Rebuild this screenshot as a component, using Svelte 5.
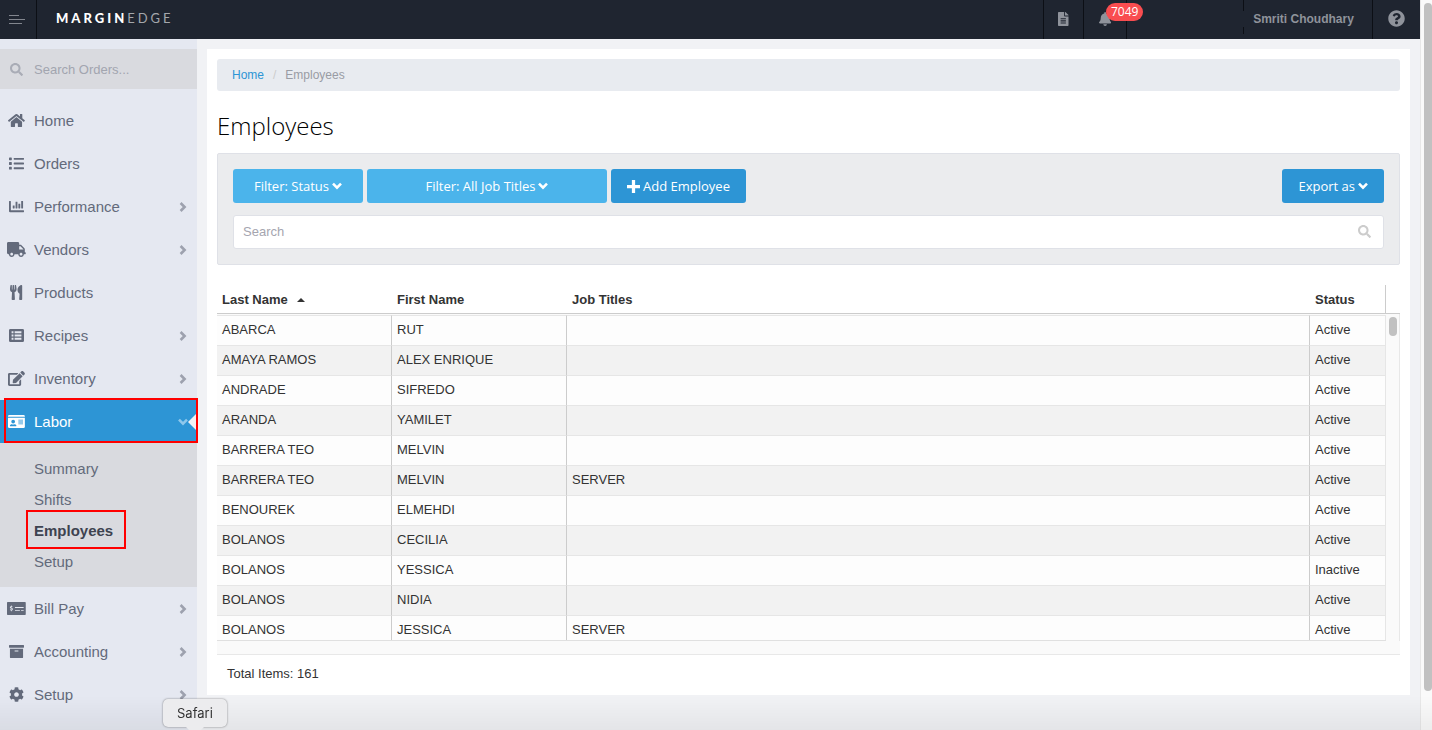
<script>
  const ICONS = {
    home: {
      box: '0 0 576 512',
      path: 'M280.37 148.26L96 300.11V464a16 16 0 0 0 16 16l112.06-.29a16 16 0 0 0 15.92-16V368a16 16 0 0 1 16-16h64a16 16 0 0 1 16 16v95.64a16 16 0 0 0 16 16.05L464 480a16 16 0 0 0 16-16V300L295.67 148.26a12.19 12.19 0 0 0-15.3 0zM571.6 251.47L488 182.56V44.05a12 12 0 0 0-12-12h-56a12 12 0 0 0-12 12v72.61L318.47 43a48 48 0 0 0-61 0L4.34 251.47a12 12 0 0 0-1.6 16.9l25.5 31A12 12 0 0 0 45.15 301l235.22-193.74a12.19 12.19 0 0 1 15.3 0L530.9 301a12 12 0 0 0 16.9-1.6l25.5-31a12 12 0 0 0-1.7-16.93z'
    },
    list: {
      box: '0 0 512 512',
      path: 'M80 368H16a16 16 0 0 0-16 16v64a16 16 0 0 0 16 16h64a16 16 0 0 0 16-16v-64a16 16 0 0 0-16-16zm0-320H16A16 16 0 0 0 0 64v64a16 16 0 0 0 16 16h64a16 16 0 0 0 16-16V64a16 16 0 0 0-16-16zm0 160H16a16 16 0 0 0-16 16v64a16 16 0 0 0 16 16h64a16 16 0 0 0 16-16v-64a16 16 0 0 0-16-16zm416 176H176a16 16 0 0 0-16 16v32a16 16 0 0 0 16 16h320a16 16 0 0 0 16-16v-32a16 16 0 0 0-16-16zm0-320H176a16 16 0 0 0-16 16v32a16 16 0 0 0 16 16h320a16 16 0 0 0 16-16V80a16 16 0 0 0-16-16zm0 160H176a16 16 0 0 0-16 16v32a16 16 0 0 0 16 16h320a16 16 0 0 0 16-16v-32a16 16 0 0 0-16-16z'
    },
    chart: {
      box: '0 0 512 512',
      path: 'M332.8 320h38.4c6.4 0 12.8-6.4 12.8-12.8V172.8c0-6.4-6.4-12.8-12.8-12.8h-38.4c-6.4 0-12.8 6.4-12.8 12.8v134.4c0 6.4 6.4 12.8 12.8 12.8zm96 0h38.4c6.4 0 12.8-6.4 12.8-12.8V76.8c0-6.4-6.4-12.8-12.8-12.8h-38.4c-6.4 0-12.8 6.4-12.8 12.8v230.4c0 6.4 6.4 12.8 12.8 12.8zm-288 0h38.4c6.4 0 12.8-6.4 12.8-12.8v-70.4c0-6.4-6.4-12.8-12.8-12.8h-38.4c-6.4 0-12.8 6.4-12.8 12.8v70.4c0 6.4 6.4 12.8 12.8 12.8zm96 0h38.4c6.4 0 12.8-6.4 12.8-12.8V108.8c0-6.4-6.4-12.8-12.8-12.8h-38.4c-6.4 0-12.8 6.4-12.8 12.8v198.4c0 6.4 6.4 12.8 12.8 12.8zM496 384H64V80c0-8.84-7.16-16-16-16H16C7.16 64 0 71.16 0 80v336c0 17.67 14.33 32 32 32h464c8.84 0 16-7.16 16-16v-32c0-8.84-7.16-16-16-16z'
    },
    truck: {
      box: '0 0 640 512',
      path: 'M624 352h-16V243.9c0-12.7-5.1-24.9-14.1-33.9L494 110.1c-9-9-21.2-14.1-33.9-14.1H416V48c0-26.5-21.5-48-48-48H48C21.5 0 0 21.5 0 48v320c0 26.5 21.5 48 48 48h16c0 53 43 96 96 96s96-43 96-96h128c0 53 43 96 96 96s96-43 96-96h48c8.8 0 16-7.2 16-16v-32c0-8.8-7.2-16-16-16zM160 464c-26.5 0-48-21.5-48-48s21.5-48 48-48 48 21.5 48 48-21.5 48-48 48zm320 0c-26.5 0-48-21.5-48-48s21.5-48 48-48 48 21.5 48 48-21.5 48-48 48zm80-208H416V144h44.1l99.9 99.9V256z'
    },
    utensils: {
      box: '0 0 416 512',
      path: 'M207.9 15.2c.8 4.7 16.1 94.5 16.1 128.8 0 52.3-27.8 89.6-68.9 104.6L168 486.7c.7 13.7-10.2 25.3-24 25.3H80c-13.7 0-24.7-11.5-24-25.3l12.9-238.1C27.7 233.6 0 196.2 0 144 0 109.6 15.3 19.9 16.1 15.2 19.3-5.1 61.4-5.4 64 16.3v141.2c1.3 3.4 15.1 3.2 16 0 1.4-25.3 7.9-139.2 8-141.8 3.3-20.8 44.7-20.8 47.9 0 .2 2.7 6.6 116.5 8 141.8.9 3.2 14.8 3.4 16 0V16.3c2.6-21.6 44.8-21.4 48-1.1zm119.2 285.7l-15 185.1c-1.2 14 9.9 26 23.9 26h56c13.3 0 24-10.7 24-24V24c0-13.2-10.7-24-24-24-82.5 0-221.4 178.5-64.9 300.9z'
    },
    recipes: {
      box: '0 0 512 512',
      path: 'M48 32h416a48 48 0 0 1 48 48v352a48 48 0 0 1-48 48H48a48 48 0 0 1-48-48V80a48 48 0 0 1 48-48zM88 112v64h64v-64zm104 0v64h232v-64zM88 224v64h64v-64zm104 0v64h232v-64zM88 336v64h64v-64zm104 0v64h232v-64z'
    },
    edit: {
      box: '0 0 576 512',
      path: 'M402.6 83.2l90.2 90.2c3.8 3.8 3.8 10 0 13.8L274.4 405.6l-92.8 10.3c-12.4 1.4-22.9-9.1-21.5-21.5l10.3-92.8L388.8 83.2c3.8-3.8 10-3.8 13.8 0zm162-22.9l-48.8-48.8c-15.2-15.2-39.9-15.2-55.2 0l-35.4 35.4c-3.8 3.8-3.8 10 0 13.8l90.2 90.2c3.8 3.8 10 3.8 13.8 0l35.4-35.4c15.2-15.3 15.2-40 0-55.2zM384 346.2V448H64V128h229.8c3.2 0 6.2-1.3 8.5-3.5l40-40c7.6-7.6 2.2-20.5-8.5-20.5H48C21.5 64 0 85.5 0 112v352c0 26.5 21.5 48 48 48h352c26.5 0 48-21.5 48-48V306.2c0-10.7-12.9-16-20.5-8.5l-40 40c-2.2 2.3-3.5 5.3-3.5 8.5z'
    },
    card: {
      box: '0 0 576 512',
      path: 'M48 32h480a48 48 0 0 1 48 48v16H0V80a48 48 0 0 1 48-48zM0 128h576v304a48 48 0 0 1-48 48H48a48 48 0 0 1-48-48zM176 192a64 64 0 1 0 0 128a64 64 0 1 0 0-128zM76 416h200c10 0 14-8 11-16c-9-28-34-48-63-48c-26 12-70 12-96 0c-30 0-55 20-63 48c-3 8 2 16 11 16zM352 192v32h160v-32zm0 64v32h160v-32zm0 64v32h160v-32z'
    },
    check: {
      box: '0 0 640 512',
      path: 'M24 32h592a24 24 0 0 1 24 24v400a24 24 0 0 1-24 24H24a24 24 0 0 1-24-24V56a24 24 0 0 1 24-24zM136 152v26c-36 4-50 50-24 72c14 12 44 14 52 24c8 12-4 22-20 20l-24-10l-24 22c12 12 26 16 40 18v28h24v-28c38-4 54-50 28-76c-14-14-44-14-52-24c-6-10 2-18 14-18l24 8l22-22c-12-10-24-14-36-16v-24zM272 208v32h296v-32zm0 96v32h168v-32zm208 0v32h88v-32z'
    },
    archive: {
      box: '0 0 512 512',
      path: 'M16 32h480a16 16 0 0 1 16 16v64a16 16 0 0 1-16 16H16a16 16 0 0 1-16-16V48a16 16 0 0 1 16-16zM32 160h448v288a32 32 0 0 1-32 32H64a32 32 0 0 1-32-32zM192 224v32h128v-32z'
    },
    cog: {
      box: '0 0 512 512',
      path: 'M487.4 315.7l-42.6-24.6c4.3-23.2 4.3-47 0-70.2l42.6-24.6c4.9-2.8 7.1-8.6 5.5-14-11.1-35.6-30-67.8-54.7-94.6-3.8-4.1-10-5.1-14.8-2.3L380.8 110c-17.9-15.4-38.5-27.3-60.8-35.1V25.8c0-5.6-3.9-10.5-9.4-11.7-36.7-8.2-74.3-7.8-109.2 0-5.5 1.2-9.4 6.1-9.4 11.7V75c-22.2 7.9-42.8 19.8-60.8 35.1L88.7 85.5c-4.9-2.8-11-1.9-14.8 2.3-24.7 26.7-43.6 58.9-54.7 94.6-1.7 5.4.6 11.2 5.5 14L67.3 221c-4.3 23.2-4.3 47 0 70.2l-42.6 24.6c-4.9 2.8-7.1 8.6-5.5 14 11.1 35.6 30 67.8 54.7 94.6 3.8 4.1 10 5.1 14.8 2.3l42.6-24.6c17.9 15.4 38.5 27.3 60.8 35.1v49.2c0 5.6 3.9 10.5 9.4 11.7 36.7 8.2 74.3 7.8 109.2 0 5.5-1.2 9.4-6.1 9.4-11.7v-49.2c22.2-7.9 42.8-19.8 60.8-35.1l42.6 24.6c4.9 2.8 11 1.9 14.8-2.3 24.7-26.7 43.6-58.9 54.7-94.6 1.5-5.5-.7-11.3-5.6-14.1zM256 336c-44.1 0-80-35.9-80-80s35.9-80 80-80 80 35.9 80 80-35.9 80-80 80z'
    },
    search: {
      box: '0 0 512 512',
      path: 'M505 442.7L405.3 343c-4.5-4.5-10.6-7-17-7H372c27.6-35.3 44-79.7 44-128C416 93.1 322.9 0 208 0S0 93.1 0 208s93.1 208 208 208c48.3 0 92.7-16.4 128-44v16.3c0 6.4 2.5 12.5 7 17l99.7 99.7c9.4 9.4 24.6 9.4 33.9 0l28.3-28.3c9.4-9.4 9.4-24.6.1-34zM208 336c-70.7 0-128-57.2-128-128 0-70.7 57.2-128 128-128 70.7 0 128 57.2 128 128 0 70.7-57.2 128-128 128z'
    },
    file: {
      box: '0 0 384 512',
      path: 'M224 136V0H24C10.7 0 0 10.7 0 24v464c0 13.3 10.7 24 24 24h336c13.3 0 24-10.7 24-24V160H248c-13.2 0-24-10.8-24-24zM96 224h192v40H96zm0 80h192v40H96zm0 80h192v32H96zM384 121.9v6.1H256V0h6.1c6.4 0 12.5 2.5 17 7l97.9 98c4.5 4.5 7 10.6 7 16.9z'
    },
    bell: {
      box: '0 0 448 512',
      path: 'M224 512c35.32 0 63.97-28.65 63.97-64H160.03c0 35.35 28.65 64 63.97 64zm215.39-149.71c-19.32-20.76-55.47-51.99-55.47-154.29 0-77.7-54.48-139.9-127.94-155.16V32c0-17.67-14.32-32-31.98-32s-31.98 14.33-31.98 32v20.84C118.56 68.1 64.08 130.3 64.08 208c0 102.3-36.15 133.53-55.47 154.29-6 6.45-8.66 14.16-8.61 21.71.11 16.4 12.98 32 32.1 32h383.8c19.12 0 32-15.6 32.1-32 .05-7.55-2.61-15.27-8.61-21.71z'
    },
    help: {
      box: '0 0 512 512',
      path: 'M504 256c0 136.997-111.043 248-248 248S8 392.997 8 256C8 119.083 119.043 8 256 8s248 111.083 248 248zM262.655 90c-54.497 0-89.255 22.957-116.549 63.758-3.536 5.286-2.353 12.415 2.715 16.258l34.699 26.31c5.205 3.947 12.621 3.008 16.665-2.122 17.864-22.658 30.113-35.797 57.303-35.797 20.429 0 45.698 13.148 45.698 32.958 0 14.976-12.363 22.667-32.534 33.976C247.128 238.528 216 254.941 216 296v4c0 6.627 5.373 12 12 12h56c6.627 0 12-5.373 12-12v-1.333c0-28.462 83.186-29.647 83.186-106.667 0-58.002-60.165-102-116.531-102zM256 338c-25.365 0-46 20.635-46 46 0 25.364 20.635 46 46 46s46-20.636 46-46c0-25.365-20.635-46-46-46z'
    },
    plus: {
      box: '0 0 12 12',
      path: 'M4.5 0h3v4.5H12v3H7.5V12h-3V7.5H0v-3h4.5z'
    }
  };

  const MENU = [
    { label: 'Home', icon: 'home' },
    { label: 'Orders', icon: 'list' },
    { label: 'Performance', icon: 'chart', more: true },
    { label: 'Vendors', icon: 'truck', more: true },
    { label: 'Products', icon: 'utensils' },
    { label: 'Recipes', icon: 'recipes', more: true },
    { label: 'Inventory', icon: 'edit', more: true },
    {
      label: 'Labor',
      icon: 'card',
      more: true,
      children: ['Summary', 'Shifts', 'Employees', 'Setup']
    },
    { label: 'Bill Pay', icon: 'check', more: true },
    { label: 'Accounting', icon: 'archive', more: true },
    { label: 'Setup', icon: 'cog', more: true }
  ];

  const employees = [
    { last: 'ABARCA', first: 'RUT', titles: '', status: 'Active' },
    { last: 'AMAYA RAMOS', first: 'ALEX ENRIQUE', titles: '', status: 'Active' },
    { last: 'ANDRADE', first: 'SIFREDO', titles: '', status: 'Active' },
    { last: 'ARANDA', first: 'YAMILET', titles: '', status: 'Active' },
    { last: 'BARRERA TEO', first: 'MELVIN', titles: '', status: 'Active' },
    { last: 'BARRERA TEO', first: 'MELVIN', titles: 'SERVER', status: 'Active' },
    { last: 'BENOUREK', first: 'ELMEHDI', titles: '', status: 'Active' },
    { last: 'BOLANOS', first: 'CECILIA', titles: '', status: 'Active' },
    { last: 'BOLANOS', first: 'YESSICA', titles: '', status: 'Inactive' },
    { last: 'BOLANOS', first: 'NIDIA', titles: '', status: 'Active' },
    { last: 'BOLANOS', first: 'JESSICA', titles: 'SERVER', status: 'Active' }
  ];

  const total = 161;
  let openMenu = 'Labor';
  let activePage = 'Employees';
  let orderSearch = '';
  let search = '';

  function toggleMenu(item) {
    if (item.children) openMenu = openMenu === item.label ? '' : item.label;
  }
</script>

{#snippet icon(name)}
  <svg class="icon" viewBox={ICONS[name].box} aria-hidden="true">
    <path d={ICONS[name].path} fill="currentColor" fill-rule="evenodd" />
  </svg>
{/snippet}

{#snippet chevron()}
  <svg class="chevron" viewBox="0 0 10 10" aria-hidden="true">
    <path d="M1 2.6 5 6.6 9 2.6" fill="none" stroke="currentColor" stroke-width="2.6" />
  </svg>
{/snippet}

<div class="window">
  <div class="app">
    <header>
      <button class="burger" type="button" aria-label="Toggle menu">
        <svg viewBox="0 0 16 10" aria-hidden="true">
          <path d="M0 .5h10M0 4.5h16M0 8.5h13" stroke="currentColor" />
        </svg>
      </button>
      <a class="logo" href="#home"><b>MARGIN</b>EDGE</a>
      <button class="tool file" type="button" aria-label="Documents">
        {@render icon('file')}
      </button>
      <button class="tool bell" type="button" aria-label="Notifications">
        {@render icon('bell')}
        <span class="badge">7049</span>
      </button>
      <div class="restaurant"></div>
      <button class="tool user" type="button">Smriti Choudhary</button>
      <button class="tool help" type="button" aria-label="Help">
        {@render icon('help')}
      </button>
    </header>

    <div class="body">
      <aside>
        <label class="order-search">
          <span class="slot">{@render icon('search')}</span>
          <input
            type="text"
            placeholder="Search Orders..."
            aria-label="Search orders"
            bind:value={orderSearch}
          />
        </label>
        <nav>
          {#each MENU as item}
            <a
              class="item"
              class:open={item.label === openMenu}
              href="#{item.label}"
              on:click|preventDefault={() => toggleMenu(item)}
            >
              <span class="slot">{@render icon(item.icon)}</span>
              <span class="label">{item.label}</span>
              {#if item.more}{@render chevron()}{/if}
            </a>
            {#if item.children && item.label === openMenu}
              <div class="submenu">
                {#each item.children as child}
                  <a
                    class:active={child === activePage}
                    href="#{child}"
                    on:click|preventDefault={() => (activePage = child)}
                  >
                    {child}
                  </a>
                {/each}
              </div>
            {/if}
          {/each}
        </nav>
      </aside>

      <main>
        <nav class="breadcrumb" aria-label="Breadcrumb">
          <a href="#home">Home</a>
          <span class="slash">/</span>
          <span>Employees</span>
        </nav>
        <h1>Employees</h1>

        <section class="filters">
          <div class="buttons">
            <button class="light status" type="button">
              Filter: Status {@render chevron()}
            </button>
            <button class="light titles" type="button">
              Filter: All Job Titles {@render chevron()}
            </button>
            <button type="button">{@render icon('plus')} Add Employee</button>
            <button class="export" type="button">
              Export as {@render chevron()}
            </button>
          </div>
          <label class="search">
            <input
              type="text"
              placeholder="Search"
              aria-label="Search employees"
              bind:value={search}
            />
            {@render icon('search')}
          </label>
        </section>

        <div class="grid">
          <div class="viewport">
            <table>
              <thead>
                <tr>
                  <th class="name">Last Name <span class="sort"></span></th>
                  <th class="name">First Name</th>
                  <th>Job Titles</th>
                  <th class="state">Status</th>
                </tr>
              </thead>
              <tbody>
                {#each employees as employee}
                  <tr>
                    <td>{employee.last}</td>
                    <td>{employee.first}</td>
                    <td>{employee.titles}</td>
                    <td>{employee.status}</td>
                  </tr>
                {/each}
              </tbody>
            </table>
          </div>
          <div class="track"><div class="thumb"></div></div>
        </div>
        <p class="total">Total Items: {total}</p>
      </main>
    </div>
  </div>
  <div class="page-scroll"><div class="page-thumb"></div></div>
  <div class="dock-shade"></div>
  <div class="dock-tip">Safari</div>
</div>

<style>
  :global(body) {
    background: #f1f2f5;
    overflow: hidden;
  }

  * {
    box-sizing: border-box;
  }

  .window {
    display: flex;
    height: 100vh;
    overflow: hidden;
    font-family: 'Liberation Sans', Arial, sans-serif;
    font-size: 13px;
    color: #333;
  }

  a {
    text-decoration: none;
  }

  button,
  input {
    border: 0;
    margin: 0;
    padding: 0;
    font-family: inherit;
    background: none;
  }

  input {
    min-width: 0;
    flex: 1;
    outline: none;
  }

  .icon {
    display: block;
    height: 15px;
  }

  .chevron {
    width: 10px;
    height: 10px;
  }

  .app {
    flex: 1;
    min-width: 0;
    display: flex;
    flex-direction: column;
  }

  header {
    flex: none;
    display: flex;
    height: 39px;
    background: #1f2530;
    color: #8f939b;
  }

  .burger {
    width: 37px;
    padding-left: 9px;
    border-right: 1px solid #0c0f15;
    color: #82868e;
  }

  .burger svg {
    display: block;
    width: 16px;
  }

  .logo {
    margin-left: 19px;
    margin-right: auto;
    font-family: Lato, sans-serif;
    font-size: 13px;
    line-height: 37px;
    letter-spacing: 3px;
    color: #a4a7ac;
  }

  .logo b {
    font-weight: 900;
    color: #fff;
  }

  .tool {
    display: flex;
    align-items: center;
    justify-content: center;
    padding-bottom: 2px;
    border-left: 1px solid #0c0f15;
    color: inherit;
  }

  .file {
    width: 40px;
  }

  .file .icon,
  .bell .icon {
    height: 14px;
  }

  .bell {
    position: relative;
    width: 43px;
  }

  .badge {
    position: absolute;
    left: 22px;
    top: 3px;
    padding: 0 5px;
    border-radius: 9px;
    background: #f94d50;
    color: #fff;
    font: 12px/18px 'Open Sans', sans-serif;
  }

  .restaurant {
    width: 117px;
    border-left: 1px solid #0c0f15;
  }

  .user {
    width: 129px;
    padding-right: 8px;
    border: 0;
    background: linear-gradient(
        #0c0f15 11px,
        transparent 11px 27px,
        #0c0f15 27px 34px,
        transparent 34px
      )
      left / 1px 100% no-repeat;
    font-size: 12px;
    font-weight: bold;
  }

  .help {
    width: 48px;
  }

  .help .icon {
    height: 17px;
  }

  .body {
    flex: 1;
    display: flex;
    align-items: flex-start;
  }

  aside {
    flex: none;
    align-self: stretch;
    width: 197px;
    padding-top: 10px;
    background: #e5e8f1;
    color: #636a7b;
    font-size: 15px;
  }

  .order-search {
    display: flex;
    align-items: center;
    gap: 8px;
    height: 40px;
    margin-bottom: 10px;
    padding-left: 7px;
    background: #d9dadf;
    color: #a9acb6;
  }

  .order-search .icon {
    height: 13px;
  }

  .order-search input {
    font-size: 13px;
    color: #636a7b;
  }

  .order-search input::placeholder {
    color: #a2a5af;
  }

  .slot {
    display: flex;
    justify-content: center;
    width: 19px;
  }

  .item {
    position: relative;
    display: flex;
    align-items: center;
    gap: 8px;
    height: 43px;
    padding: 0 9px 0 7px;
    color: inherit;
  }

  .label {
    flex: 1;
  }

  .item .chevron {
    color: #9da1ae;
    transform: rotate(-90deg);
  }

  .open {
    background: #2d95d5;
    color: #fff;
  }

  .open .chevron {
    color: #8fc8ec;
    transform: none;
  }

  /* white notch pointing into the open item */
  .open::before {
    content: '';
    position: absolute;
    top: 13px;
    right: 0;
    border: 9px solid transparent;
    border-left: 0;
    border-right-color: #f1f2f5;
  }

  .open::after {
    content: '';
    position: absolute;
    inset: -2px -1px 0 4px;
    border: 2px solid #f00;
    z-index: 1;
  }

  .submenu {
    display: flex;
    flex-direction: column;
    padding: 10px 0;
    background: #d9dadf;
  }

  .submenu a {
    position: relative;
    padding-left: 34px;
    line-height: 31px;
    color: inherit;
  }

  .submenu .active {
    font-weight: bold;
    color: #3e4350;
  }

  .submenu .active::after {
    content: '';
    position: absolute;
    inset: -5px auto -3px 26px;
    width: 96px;
    border: 2px solid #f00;
  }

  main {
    flex: 1;
    min-width: 0;
    margin: 10px;
    padding: 10px;
    background: #fff;
  }

  .breadcrumb {
    display: flex;
    gap: 9px;
    padding: 0 15px;
    border-radius: 3px;
    background: #e8ebf0;
    font-size: 12px;
    line-height: 32px;
    color: #999ca4;
  }

  .breadcrumb a {
    color: #2d95d5;
  }

  .slash {
    color: #ccc;
  }

  h1 {
    margin: 20px 0 12px;
    font: 300 24px/30px 'Open Sans', sans-serif;
    color: #000;
  }

  .filters {
    padding: 15px;
    border: 1px solid #dfe1e7;
    border-radius: 2px;
    background: #ebecee;
  }

  .buttons {
    display: flex;
    gap: 4px;
    margin-bottom: 12px;
  }

  .buttons button {
    display: flex;
    align-items: center;
    justify-content: center;
    gap: 3px;
    height: 34px;
    padding: 0 16px;
    border-radius: 3px;
    background: #2d95d5;
    color: #fff;
    font: 13px 'Open Sans', sans-serif;
  }

  .buttons .icon {
    height: 13px;
  }

  .buttons .light {
    background: #4bb4eb;
  }

  .buttons .status {
    width: 130px;
  }

  .buttons .titles {
    width: 240px;
  }

  .buttons .export {
    margin-left: auto;
  }

  .search {
    display: flex;
    align-items: center;
    height: 34px;
    padding: 0 12px 2px 9px;
    border: 1px solid #dfe1e7;
    border-radius: 3px;
    background: #fff;
    color: #ccc;
  }

  .search .icon {
    height: 13px;
  }

  .search input {
    font-size: 13px;
    color: #333;
  }

  .search input::placeholder {
    color: #a5a5af;
  }

  .grid {
    display: flex;
    margin-top: 20px;
    padding-bottom: 13px;
    border-bottom: 1px solid #e8e8e8;
    background: #fafafa;
  }

  .viewport {
    flex: 1;
    height: 356px;
    overflow: hidden;
    border-bottom: 1px solid #e0e0e0;
  }

  table {
    width: 100%;
    table-layout: fixed;
    border-spacing: 0;
  }

  th,
  td {
    padding: 0 5px;
    text-align: left;
  }

  th {
    height: 29px;
    border-bottom: 1px solid #ccc;
    background: #fff;
  }

  th:last-child {
    border-right: 1px solid #ccc;
  }

  .name {
    width: 175px;
  }

  .state {
    width: 76px;
  }

  .sort {
    display: inline-block;
    margin: 0 0 2px 6px;
    border: 4px solid transparent;
    border-top: 0;
    border-bottom-color: #333;
  }

  /* thin gap between the header line and the first row */
  tbody::before {
    content: '';
    display: block;
    height: 1px;
  }

  td {
    height: 30px;
    padding-bottom: 2px;
    border-top: 1px solid #e6e6e6;
    border-right: 1px solid #ccc;
    background: #fdfdfd;
  }

  td:last-child {
    border-right-color: #e6e6e6;
  }

  tr:nth-child(even) td {
    background: #f2f2f2;
  }

  .track {
    width: 14px;
    border-right: 1px solid #e8e8e8;
  }

  .track::before {
    content: '';
    display: block;
    height: 28px;
    margin-right: -1px;
    border-bottom: 1px solid #ccc;
    background: #fff;
  }

  .thumb {
    width: 8px;
    height: 19px;
    margin: 3px auto 0;
    border-radius: 4px;
    background: #c1c1c1;
  }

  .total {
    margin: 0;
    padding: 8px 10px 0;
    line-height: 22px;
  }

  .page-scroll {
    width: 12px;
    padding: 3px 0 0 3px;
    border-left: 1px solid #e8e8e8;
    background: #fafafa;
  }

  .page-thumb {
    height: calc(100% - 39px);
    border-radius: 4px;
    background: #c1c1c1;
  }

  .dock-shade {
    position: fixed;
    inset: auto 0 0;
    height: 34px;
    background: linear-gradient(transparent, rgba(0, 0, 0, 0.05));
    pointer-events: none;
  }

  /* tooltip hanging over the bottom edge of the screen */
  .dock-tip {
    position: fixed;
    left: 163px;
    bottom: 3px;
    padding: 0 14px;
    border-radius: 5px;
    background: #ececee;
    box-shadow: 0 0 2px rgba(0, 0, 0, 0.5);
    font: 13px/28px Inter, sans-serif;
  }

  .dock-tip::after {
    content: '';
    position: absolute;
    top: 100%;
    left: 50%;
    margin-left: -9px;
    border: 9px solid transparent;
    border-top-color: #ececee;
    border-bottom: 0;
  }
</style>
